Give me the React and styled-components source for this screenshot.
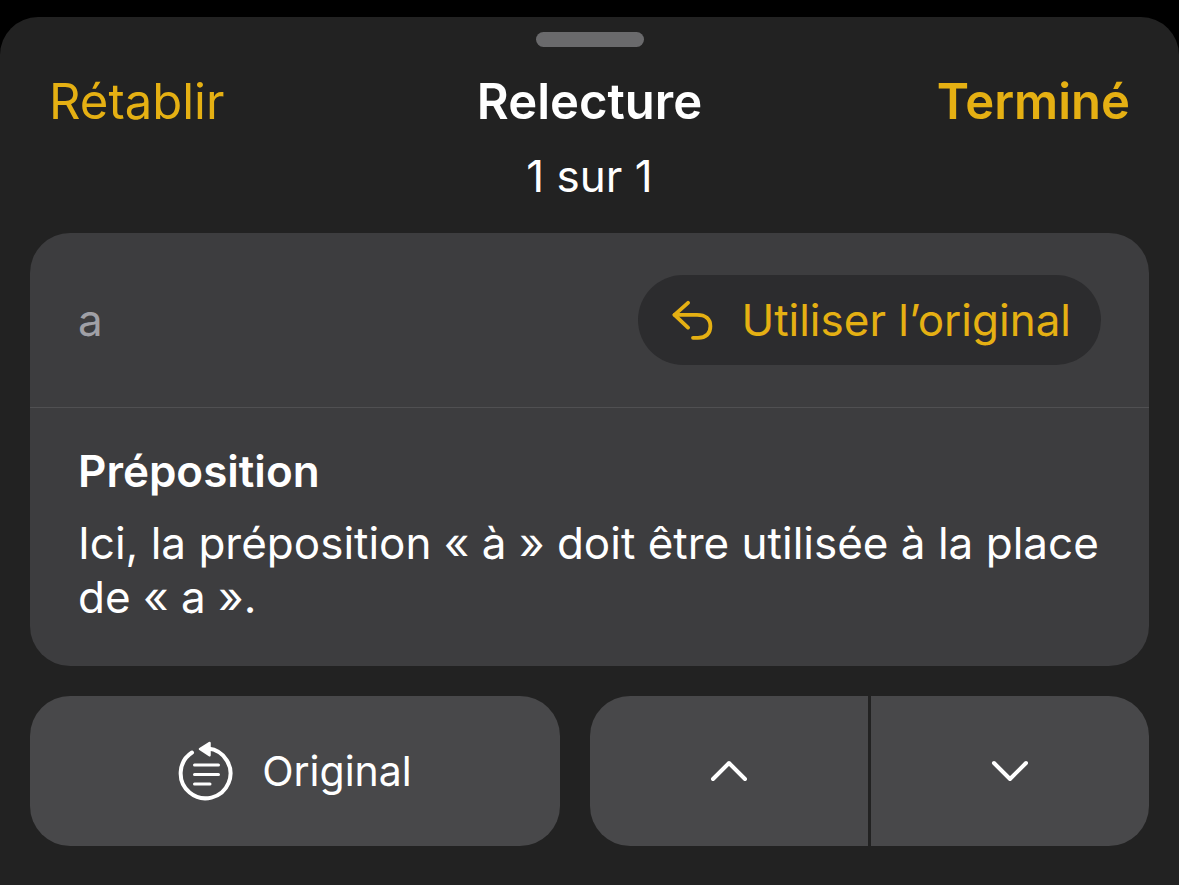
import styled, { createGlobalStyle } from 'styled-components';

const GlobalStyle = createGlobalStyle`
  *, *::before, *::after {
    box-sizing: border-box;
  }
  body {
    margin: 0;
    background: #000;
    color: #fff;
    font-family: Inter, 'Liberation Sans', sans-serif;
  }
  button {
    margin: 0;
    padding: 0;
    border: none;
    background: none;
    color: inherit;
    font: inherit;
    cursor: pointer;
  }
`;

const Sheet = styled.main`
  display: flex;
  flex-direction: column;
  min-height: calc(100vh - 17px);
  margin-top: 17px;
  padding: 15px 30px 39px;
  border-radius: 38px 38px 0 0;
  background: #222;
`;

const Grabber = styled.div`
  align-self: center;
  width: 108px;
  height: 15px;
  border-radius: 8px;
  background: #6a6a6c;
`;

const Header = styled.header`
  display: grid;
  grid-template-columns: 1fr auto 1fr;
  align-items: center;
  margin-top: 25px;
  padding: 0 19px;
  line-height: 60px;
`;

const HeaderButton = styled.button`
  justify-self: ${({ $end }) => ($end ? 'end' : 'start')};
  color: #e5b013;
  font-size: 49px;
  font-weight: ${({ $end }) => ($end ? 600 : 400)};
`;

const Title = styled.h1`
  margin: 0;
  font-size: 49px;
  font-weight: 600;
`;

const Count = styled.p`
  margin: 16px 0 29px;
  font-size: 44px;
  line-height: 56px;
  text-align: center;
`;

const Card = styled.section`
  border-radius: 40px;
  background: #3d3d3f;
  font-size: 44px;
  line-height: 54px;
`;

const CardTop = styled.div`
  display: flex;
  align-items: center;
  justify-content: space-between;
  padding: 42px 48px;
  border-bottom: 1px solid #505052;
`;

const Word = styled.span`
  color: #a0a0a6;
`;

const Pill = styled.button`
  display: flex;
  align-items: center;
  gap: 28px;
  height: 90px;
  padding: 0 30px 0 34px;
  border-radius: 45px;
  background: #2c2c2e;
  color: #e5b013;
`;

const CardBody = styled.div`
  padding: 36px 48px 42px;
`;

const Subject = styled.h2`
  margin: 0 0 18px;
  font-size: 44px;
  font-weight: 600;
`;

const Explanation = styled.p`
  margin: 0;
`;

const Actions = styled.div`
  display: grid;
  grid-template-columns: 530fr 559fr;
  gap: 30px;
  margin-top: 30px;
`;

const ActionButton = styled.button`
  display: flex;
  align-items: center;
  justify-content: center;
  gap: 28px;
  height: 150px;
  border-radius: 40px;
  background: #48484a;
  font-size: 41px;
`;

const Stepper = styled.div`
  display: grid;
  grid-template-columns: 1fr 1fr;
  gap: 3px;
  border-radius: 40px;
  overflow: hidden;
`;

const StepButton = styled(ActionButton)`
  border-radius: 0;
`;

const UndoIcon = () => (
  <svg width="41" height="40" viewBox="0 0 41 40" fill="none" stroke="currentColor" strokeWidth="3.8" strokeLinecap="round" strokeLinejoin="round" aria-hidden="true">
    <path d="M16 2.8 2.5 14.8 16 27.6" />
    <path d="M2.500 14.8H25C33.5 14.8 38.4 19 38.400 26.3S34 37.8 26 37.8H21" />
  </svg>
);

const OriginalIcon = () => (
  <svg width="56" height="60" viewBox="0 0 56 60" fill="none" stroke="currentColor" strokeLinecap="round" strokeLinejoin="round" aria-hidden="true">
    <path d="M30 7.6A24.9 24.9 0 1 1 14 11.5" strokeWidth="4" />
    <path d="M31.5 2 22 8l9.5 6.3Z" fill="currentColor" strokeWidth="2.5" />
    <path d="M16.5 24h24M16.5 33.5h24M16.5 43h15.5" strokeWidth="3" />
  </svg>
);

const Chevron = ({ d }) => (
  <svg width="38" height="22" viewBox="0 0 38 22" fill="none" stroke="currentColor" strokeWidth="4" strokeLinecap="round" strokeLinejoin="round" aria-hidden="true">
    <path d={d} />
  </svg>
);

const App = () => (
  <>
    <GlobalStyle />
    <Sheet>
      <Grabber />
      <Header>
        <HeaderButton type="button">Rétablir</HeaderButton>
        <Title>Relecture</Title>
        <HeaderButton type="button" $end>Terminé</HeaderButton>
      </Header>
      <Count>1 sur 1</Count>
      <Card>
        <CardTop>
          <Word>a</Word>
          <Pill type="button">
            <UndoIcon />
            Utiliser l’original
          </Pill>
        </CardTop>
        <CardBody>
          <Subject>Préposition</Subject>
          <Explanation>
            Ici, la préposition «&nbsp;à&nbsp;» doit être utilisée à la place de «&nbsp;a&nbsp;».
          </Explanation>
        </CardBody>
      </Card>
      <Actions>
        <ActionButton type="button">
          <OriginalIcon />
          Original
        </ActionButton>
        <Stepper>
          <StepButton type="button" aria-label="Précédent">
            <Chevron d="M3 19 19 3l16 16" />
          </StepButton>
          <StepButton type="button" aria-label="Suivant">
            <Chevron d="M3 3l16 16L35 3" />
          </StepButton>
        </Stepper>
      </Actions>
    </Sheet>
  </>
);

export default App;
